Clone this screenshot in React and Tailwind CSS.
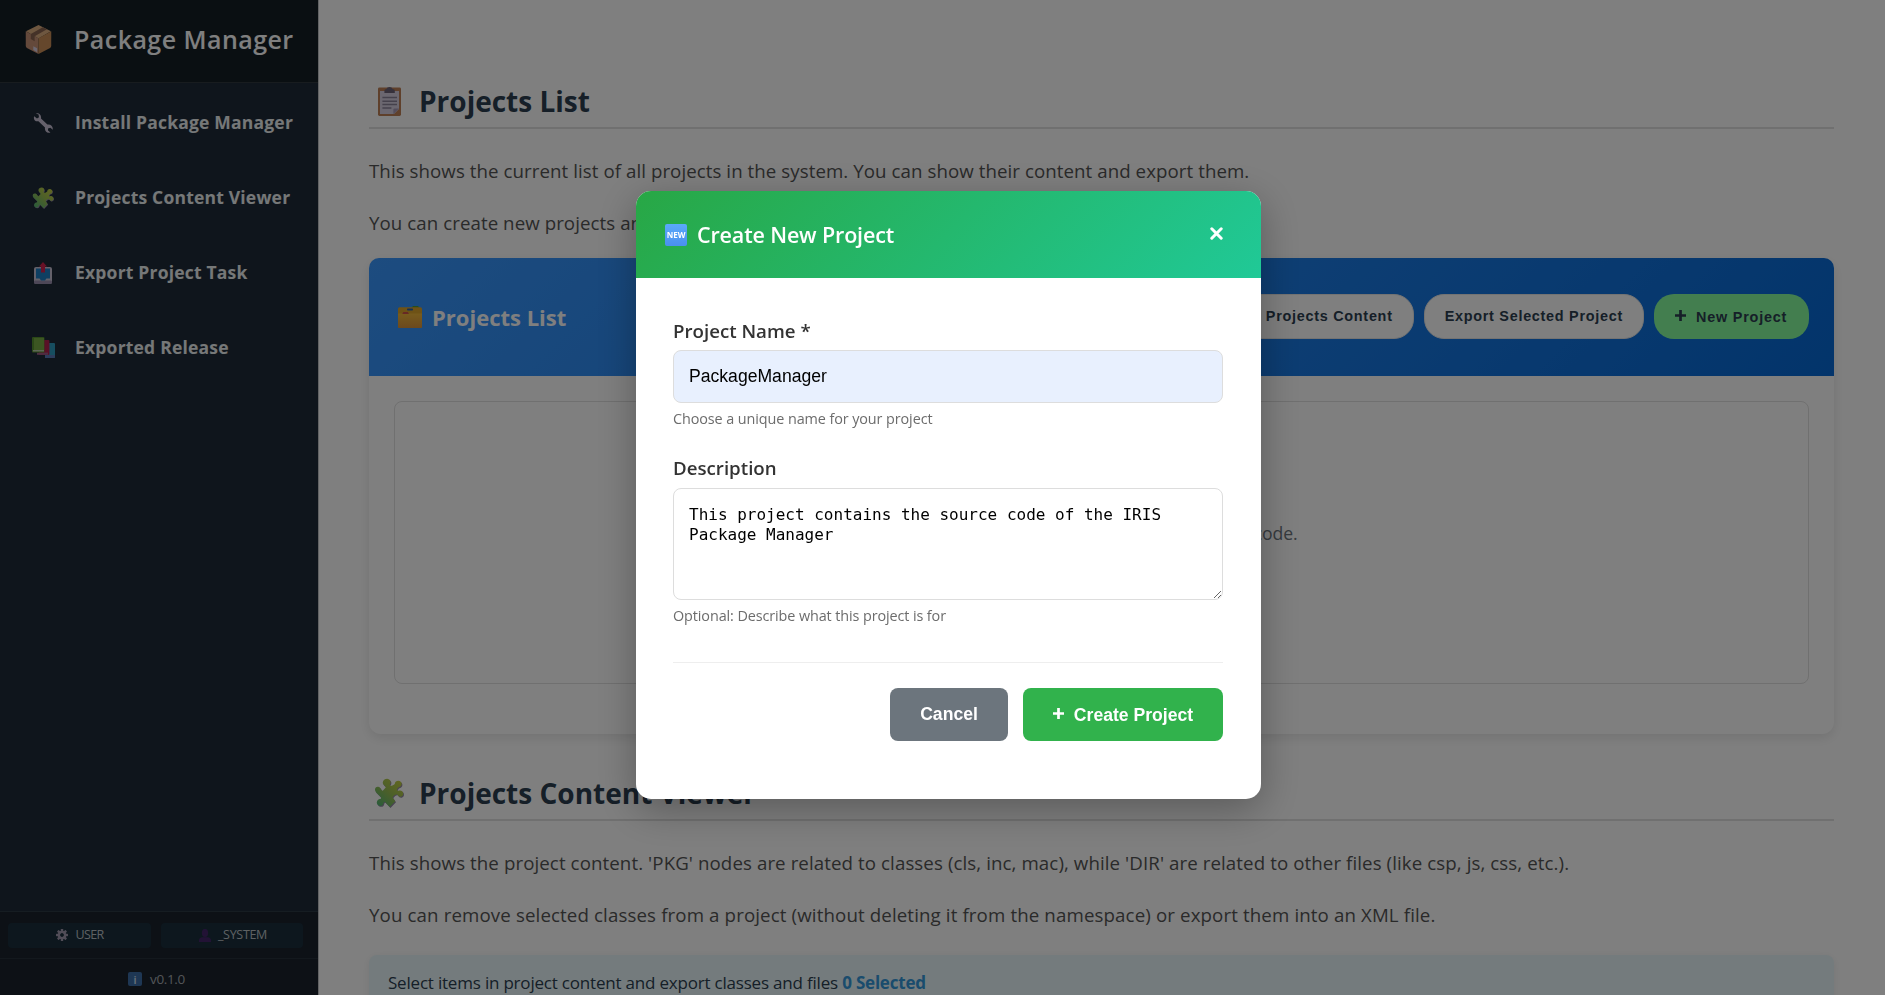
import React from "react";

function PackageIcon({ className }) {
  return (
    <svg className={className} viewBox="0 0 28 31">
      <path d="M14 0.5 27 7 14 14.5 1 7Z" fill="#dcae80" />
      <path d="M0.8 7 14 14.2V30.6L2 24.2Q0.8 23.5 0.8 22Z" fill="#c99276" />
      <path d="M27.2 7 14 14.2V30.6L26 24.2Q27.2 23.5 27.2 22Z" fill="#ca8f58" />
      <path d="M18.5 2.7 6 9.8V15L10 17.2V12L22.8 4.9Z" fill="#8a6450" />
      <path d="M8.6 22.4 12.6 24.6V28.6L8.6 26.4Z" fill="#d8d0e4" />
    </svg>
  );
}

function WrenchIcon({ className }) {
  return (
    <svg className={className} viewBox="0 0 20 20">
      <path
        d="M1.2 3.2 4 5.4 6 4.2 5.6 1.6 3 .4C6-.4 8.6 1.8 8 5.4L14.4 11.6C17.6 11 20.2 13.6 19.8 16.8L17.4 14.8 15 15.4 15 17.6 17.4 19.4C14 20.6 11.4 18 12 14.4L5.4 8.2C2.2 8.8 0 6.4 1.2 3.2Z"
        fill="#cbc3d6"
      />
    </svg>
  );
}

function PuzzleIcon({ className }) {
  return (
    <svg className={className} viewBox="0 0 24 24">
      <defs>
        <linearGradient id="puzzle" x1="1" y1="0" x2="0.1" y2="1">
          <stop offset="0" stopColor="#cbd040" />
          <stop offset="0.5" stopColor="#9bc052" />
          <stop offset="1" stopColor="#52b878" />
        </linearGradient>
      </defs>
      <path
        d="M10.6.6C13.4.8 14 3.8 12.6 5.2C12.4 6.4 14.6 6.8 16.6 4.8C16.8 2.2 20 1.4 21.6 3.2C23 5.4 21.4 7.4 19.4 7.6C17.8 9.2 18.4 10.6 19.6 10.2C22 9.2 24 11.4 23.2 13.6C22.2 15.6 19.6 15.4 18.8 13.4C17.4 12.6 16.4 13.6 14.8 15.4L17 18.6 12.6 23.2 8.8 19.2C7.4 18.8 8 20.4 7 21.6C5.4 23.2 2.4 22.2 2.2 19.8C2.2 17.6 4 16.8 5.6 16.6L5.6 15.4 1.6 11.4C-.4 8.8 1.6 6.2 4 7.2C5.8 8 5.4 10 7 10.2L9.4 7.6C9.4 6.2 7 5.8 7 3.6C7.2 1.8 8.6.6 10.6.6Z"
        fill="#9388a6"
        transform="translate(.6 .7)"
      />
      <path
        d="M10.6.6C13.4.8 14 3.8 12.6 5.2C12.4 6.4 14.6 6.8 16.6 4.8C16.8 2.2 20 1.4 21.6 3.2C23 5.4 21.4 7.4 19.4 7.6C17.8 9.2 18.4 10.6 19.6 10.2C22 9.2 24 11.4 23.2 13.6C22.2 15.6 19.6 15.4 18.8 13.4C17.4 12.6 16.4 13.6 14.8 15.4L17 18.6 12.6 23.2 8.8 19.2C7.4 18.8 8 20.4 7 21.6C5.4 23.2 2.4 22.2 2.2 19.8C2.2 17.6 4 16.8 5.6 16.6L5.6 15.4 1.6 11.4C-.4 8.8 1.6 6.2 4 7.2C5.8 8 5.4 10 7 10.2L9.4 7.6C9.4 6.2 7 5.8 7 3.6C7.2 1.8 8.6.6 10.6.6Z"
        fill="url(#puzzle)"
      />
    </svg>
  );
}

function OutboxIcon({ className }) {
  return (
    <svg className={className} viewBox="0 0 18 22">
      <rect x="0" y="5" width="18" height="17" rx="2" fill="#c9c2d4" />
      <rect x="0" y="18.4" width="18" height="3.6" rx="1.4" fill="#9a8fae" />
      <path d="M2 6.6H16V16.4H12.4L11 18.4H7L5.6 16.4H2Z" fill="#1f7fc4" />
      <path d="M9 0 13 4.6H11V10.6H7V4.6H5Z" fill="#d0234e" />
    </svg>
  );
}

function BooksIcon({ className }) {
  return (
    <svg className={className} viewBox="0 0 23 21">
      <rect x="14" y="6" width="9" height="15" rx="1" fill="#2f9cc0" />
      <path d="M13 18H23V20Q23 21 22 21H13Z" fill="#5a7ab8" />
      <rect x="7" y="3" width="10.4" height="15" rx="1" fill="#b5204f" />
      <rect x="5" y="15.6" width="11" height="2.2" fill="#9c5d86" />
      <rect x="0" y="0" width="12.4" height="15.4" rx="1" fill="#56902f" />
      <rect x="2" y="1" width="10" height="12" fill="#79ad45" />
      <rect x="1" y="13.2" width="11" height="1.2" fill="#d6dccb" />
    </svg>
  );
}

function GearIcon({ className }) {
  const teeth = [0, 45, 90, 135, 180, 225, 270, 315];
  return (
    <svg className={className} viewBox="-6 -6 12 12">
      {teeth.map((a) => (
        <rect key={a} x="-1.2" y="-6" width="2.4" height="3" rx=".6" fill="#a39bb0" transform={`rotate(${a})`} />
      ))}
      <circle r="3.1" fill="none" stroke="#a39bb0" strokeWidth="2.4" />
    </svg>
  );
}

function PersonIcon({ className }) {
  return (
    <svg className={className} viewBox="0 0 12 13">
      <ellipse cx="6" cy="4" rx="3.1" ry="4" fill="#45256a" />
      <path d="M0 13V11.4Q.2 8.4 3.4 8.2H8.6Q11.8 8.4 12 11.4V13Z" fill="#45256a" />
    </svg>
  );
}

function ClipboardIcon({ className }) {
  return (
    <svg className={className} viewBox="0 0 23 29">
      <rect x="0" y="0.5" width="23" height="28.5" rx="1.4" fill="#bf8056" />
      <path d="M2 4H21V22L16 27H2Z" fill="#d6cfe0" />
      <path d="M21 21.5 15.4 27.2V22.4Q15.4 21.5 16.4 21.5Z" fill="#a89bb8" />
      <path d="M6.4 6V3.6Q6.4 2 8.4 2Q9 0 11.5 0Q14 0 14.6 2Q16.8 2 16.8 3.6V6Z" fill="#6d6377" />
      <path d="M4.4 10.6H19M4.4 14.2H19M4.4 17.6H19M4.4 21H13.4" stroke="#8b8299" strokeWidth="1.5" />
    </svg>
  );
}

function FolderIcon({ className }) {
  return (
    <svg className={className} viewBox="0 0 24 22">
      <defs>
        <linearGradient id="folder" x1="0" y1="0" x2="0" y2="1">
          <stop offset="0" stopColor="#f0b83a" />
          <stop offset="1" stopColor="#d8923c" />
        </linearGradient>
      </defs>
      <path d="M13 2.4 15 0H20L22 2.4Z" fill="#4f9a3c" />
      <rect x="0" y="1.2" width="24" height="20.8" rx="1.6" fill="#dda42c" />
      <rect x="9" y="2.6" width="6" height="2" rx=".8" fill="#2c62a8" />
      <path d="M0 7.6H24V20.6Q24 22 22.4 22H1.6Q0 22 0 20.6Z" fill="url(#folder)" />
      <path d="M4.2 7.8 5.4 6.2H9.8L11 7.8Z" fill="#c93452" />
    </svg>
  );
}

function PlusIcon({ className }) {
  return (
    <svg className={className} viewBox="0 0 11 11">
      <path d="M5.5 0V11M0 5.5H11" stroke="currentColor" strokeWidth="2.7" />
    </svg>
  );
}

function NavItem({ icon, label }) {
  return (
    <li className="flex h-[75px] items-center">
      <span className="flex w-[86px] justify-center">{icon}</span>
      <span className="-ml-[11px] whitespace-nowrap text-[17.5px] font-bold tracking-[0.2px] text-[#ecf0f1]">{label}</span>
    </li>
  );
}

function Sidebar() {
  return (
    <aside className="flex h-full w-[319px] shrink-0 flex-col border-r border-[#c4c6c8] bg-[#1e2b39]">
      <div className="flex h-[83px] items-center border-b border-[#30383f] bg-[#141e25] pb-[3px] pl-[25px]">
        <PackageIcon className="h-[31px] w-[27px]" />
        <h1 className="ml-[22px] whitespace-nowrap text-[25px] font-semibold tracking-[0.45px] text-white">Package Manager</h1>
      </div>
      <ul className="flex-1 pt-[2px]">
        <NavItem icon={<WrenchIcon className="h-5 w-5" />} label="Install Package Manager" />
        <NavItem icon={<PuzzleIcon className="h-[22px] w-[22px]" />} label="Projects Content Viewer" />
        <NavItem icon={<OutboxIcon className="h-[22px] w-[18px]" />} label="Export Project Task" />
        <NavItem icon={<BooksIcon className="h-[21px] w-[23px]" />} label="Exported Release" />
      </ul>
      <div className="border-t border-[#2c3a45] bg-[#1a222d]">
        <div className="flex h-[46px] items-center gap-[10px] pl-2 text-[12.5px] text-[#bdc3c7]">
          <div className="flex h-[25px] w-[143px] items-center justify-center gap-[7px] rounded bg-[#1a2f3d] pl-px">
            <GearIcon className="h-3 w-3" />
            <span className="tracking-[-0.6px]">USER</span>
          </div>
          <div className="flex h-[25px] w-[142px] items-center justify-center gap-[7px] rounded bg-[#1a2f3d] pl-[2px]">
            <PersonIcon className="h-[13px] w-3" />
            <span className="tracking-[-0.3px]">_SYSTEM</span>
          </div>
        </div>
        <div className="flex h-[37px] items-center justify-center border-t border-[#26303b] pr-[5px] pt-[4px] text-[13.5px] text-[#a4abb0]">
          <span className="mr-2 flex h-[14px] w-[14px] items-center justify-center rounded-[2px] bg-[#3d6ea8] text-[11px] font-semibold leading-none text-[#d8e4f4]">i</span>
          <span className="tracking-[-0.35px]">v0.1.0</span>
        </div>
      </div>
    </aside>
  );
}

function SectionTitle({ icon, children }) {
  return (
    <h2 className="flex h-[54px] items-center border-b-2 border-[#e0e0e0] text-[28px] font-bold text-[#2c3e50]">
      <span className="flex w-[50px] pl-[6px]">{icon}</span>
      {children}
    </h2>
  );
}

function HeaderButton({ children }) {
  return (
    <button className="flex h-[45px] items-center justify-center whitespace-nowrap rounded-[20px] border border-[#e6e6e6] bg-white px-[20px] pt-[2px] font-['Liberation_Sans',sans-serif] text-[14.4px] font-bold tracking-[0.73px] text-[#2c3e50]">
      {children}
    </button>
  );
}

function Main() {
  return (
    <main className="min-w-0 flex-1 overflow-hidden bg-white pl-[50px] pr-[51px] pt-[75px] text-[18.7px] text-[#555]">
      <section>
        <SectionTitle icon={<ClipboardIcon className="ml-[3px] h-[29px] w-[23px]" />}>Projects List</SectionTitle>
        <div className="mt-4 whitespace-nowrap leading-[52px]">
          <p className="tracking-[0.065px]">This shows the current list of all projects in the system. You can show their content and export them.</p>
          <p className="tracking-[0.065px]">You can create new projects and add items to them.</p>
        </div>
        <div className="mt-[9px] h-[476px] rounded-[12px] bg-white shadow-[0_4px_12px_rgba(0,0,0,0.1)]">
          <div className="flex h-[118px] items-center rounded-t-[10px] bg-linear-[135deg,#3a98ff,#0669d6] pl-[29px] pr-[25px]">
            <FolderIcon className="h-[22px] w-6" />
            <h3 className="ml-[10px] text-[22px] font-bold text-white">Projects List</h3>
            <div className="mb-[2px] ml-auto flex gap-[10px]">
              <HeaderButton>Show Projects Content</HeaderButton>
              <HeaderButton>Export Selected Project</HeaderButton>
              <button className="flex h-[45px] w-[155px] items-center whitespace-nowrap rounded-[20px] bg-[#86fd9e] pl-[21px] font-['Liberation_Sans',sans-serif] text-[14.4px] font-bold tracking-[0.8px] text-[#2c3e50]">
                <PlusIcon className="mb-[2px] mr-[10px] h-[11px] w-[11px]" />
                <span className="pt-[3px]">New Project</span>
              </button>
            </div>
          </div>
          <div className="px-[25px] pt-[25px]">
            <div className="flex h-[283px] items-center justify-center rounded-lg border border-[#e0e0e0] pb-[19px] text-[17.6px] tracking-[-0.1px] text-[#6c757d]">
              Select one of the projects above to view its code.
            </div>
          </div>
        </div>
      </section>
      <section className="mt-[33px]">
        <SectionTitle icon={<PuzzleIcon className="-ml-px h-[30px] w-[30px]" />}>Projects Content Viewer</SectionTitle>
        <div className="mt-4 whitespace-nowrap leading-[52px]">
          <p className="tracking-[0.09px]">
            This shows the project content. 'PKG' nodes are related to classes (cls, inc, mac), while 'DIR' are related to other files (like csp, js, css, etc.).
          </p>
          <p className="tracking-[0.125px]">
            You can remove selected classes from a project (without deleting it from the namespace) or export them into an XML file.
          </p>
        </div>
        <div className="mt-[14px] h-[60px] whitespace-nowrap rounded-lg bg-[#e8f7fa] pl-[19px] text-[17px] leading-[55px] tracking-[-0.2px] text-[#2c3e50] shadow-[0_2px_8px_rgba(0,0,0,0.08)]">
          Select items in project content and export classes and files <b className="font-bold text-[#3498db]">0 Selected</b>
        </div>
      </section>
    </main>
  );
}

function CreateProjectModal() {
  return (
    <div className="fixed inset-0 flex items-start bg-black/50 pl-[636px] pt-[191px]">
      <div className="h-[608px] w-[625px] overflow-hidden rounded-[15px] bg-white shadow-[0_10px_40px_rgba(0,0,0,0.3)]">
        <div className="flex h-[87px] items-center bg-linear-[135deg,#28a745,#20c997] pl-[29px] pr-[38px] text-white">
          <span className="flex h-[22px] w-[22px] items-center justify-center rounded-[2px] bg-linear-[180deg,#5aa9fb,#4a90ee] text-[8px] font-bold leading-none">NEW</span>
          <h3 className="ml-[10px] pt-[2px] text-[21.5px] font-semibold tracking-[-0.15px]">Create New Project</h3>
          <button className="mb-[2px] ml-auto">
            <svg className="h-[13px] w-[13px]" viewBox="0 0 13 13">
              <path d="M1.8 1.8 11.2 11.2M11.2 1.8 1.8 11.2" stroke="#fff" strokeWidth="3" strokeLinecap="round" />
            </svg>
          </button>
        </div>
        <form className="pl-[37px] pr-[38px] pt-[39px] text-[#333]">
          <label className="block text-[18.7px] font-semibold leading-[28px]">Project Name *</label>
          <input
            className="mt-[5px] block h-[53px] w-full rounded-lg border border-[#ddd] bg-[#e8f0fe] px-[15px] font-['Liberation_Sans',sans-serif] text-[17.6px] text-black"
            defaultValue="PackageManager"
          />
          <p className="mt-[5px] text-[14.4px] leading-[21px] tracking-[-0.09px] text-[#6c6c6c]">Choose a unique name for your project</p>
          <label className="mt-[25px] block text-[18.7px] font-semibold leading-[28px]">Description</label>
          <textarea
            className="mt-[6px] block h-[112px] w-full rounded-lg border border-[#ddd] bg-white p-[15px] pt-[16px] font-['DejaVu_Sans_Mono',monospace] text-[16px] leading-[20px] text-black"
            defaultValue="This project contains the source code of the IRIS Package Manager"
          />
          <p className="mt-[5px] text-[14.4px] leading-[21px] tracking-[-0.1px] text-[#6c6c6c]">Optional: Describe what this project is for</p>
          <div className="mt-9 flex justify-end gap-[15px] border-t border-[#eee] pt-[25px] font-['Liberation_Sans',sans-serif] text-[17.6px] font-bold text-white">
            <button className="h-[53px] w-[118px] rounded-lg bg-[#6c757d]">Cancel</button>
            <button className="flex h-[53px] w-[200px] items-center justify-center rounded-lg bg-[#31b24c]">
              <PlusIcon className="mb-[2px] mr-[10px] h-[11px] w-[11px]" />
              <span className="pt-px">Create Project</span>
            </button>
          </div>
        </form>
      </div>
    </div>
  );
}

export default function App() {
  return (
    <div className="flex h-[995px] w-[1885px] overflow-hidden bg-white font-['Open_Sans','Noto_Sans',sans-serif]">
      <Sidebar />
      <Main />
      <CreateProjectModal />
    </div>
  );
}
